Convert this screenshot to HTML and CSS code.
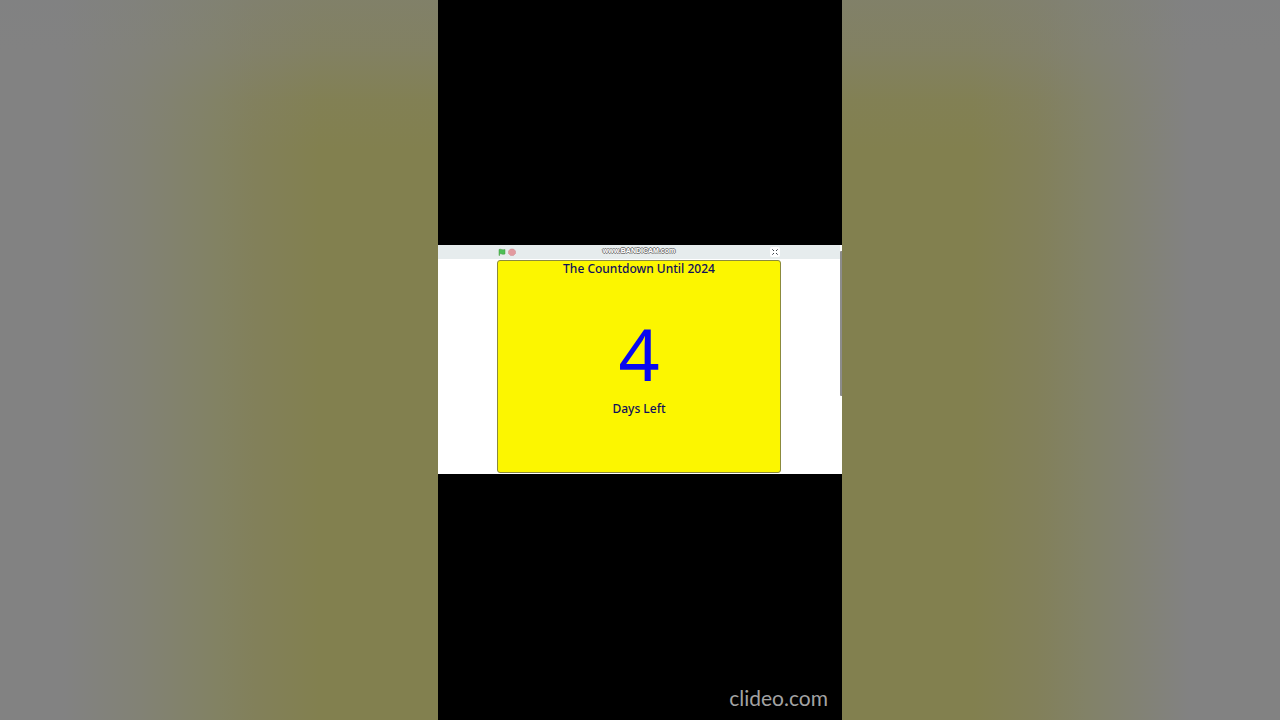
FILE: index.html
```
<!DOCTYPE html>
<html lang="en">
<head>
    <meta charset="UTF-8">
    <meta name="viewport" content="width=device-width, initial-scale=1.0">
    <title>The Countdown Until 2024</title>
    <link rel="stylesheet" href="styles.css">
</head>
<body>
    <main class="video">
        <section class="player">
            <div class="screen">
                <header class="toolbar">
                    <div class="controls">
                        <button class="btn" type="button" aria-label="Start">
                            <svg width="8" height="8" viewBox="0 0 16 16">
                                <path d="M2 3c4-2 6 2 12 0v9c-6 2-8-2-11 0v3H2z" fill="#4cbf56" stroke="#45993d"/>
                            </svg>
                        </button>
                        <button class="btn" type="button" aria-label="Stop">
                            <svg width="8" height="8" viewBox="0 0 16 16">
                                <path d="M5 2h6l4 4v5l-4 4H5l-4-4V6z" fill="#e29a9f" stroke="#cf8b90"/>
                            </svg>
                        </button>
                    </div>
                    <span class="recorder">www.BANDICAM.com</span>
                    <button class="btn fullscreen" type="button" aria-label="Exit full screen">
                        <svg width="8" height="8" viewBox="0 0 8 8">
                            <path d="M1 1l2 2M7 1l-2 2M1 7l2-2M7 7l-2-2" stroke="#7a7f86"/>
                            <path d="M2 2h1v1H2zM5 2h1v1H5zM2 5h1v1H2zM5 5h1v1H5z" fill="#3f454d"/>
                        </svg>
                    </button>
                </header>
                <div class="stage">
                    <h1 class="label">The Countdown Until 2024</h1>
                    <p class="number">4</p>
                    <p class="label">Days Left</p>
                </div>
            </div>
            <div class="scrollbar">
                <div class="thumb"></div>
            </div>
        </section>
        <span class="watermark">clideo.com</span>
    </main>
</body>
</html>
```
FILE: styles.css
```
* {
    margin: 0;
    padding: 0;
    box-sizing: border-box;
}

body {
    display: flex;
    justify-content: center;
    min-height: 100vh;
    font-family: "Noto Sans", sans-serif;
    background:
        linear-gradient(rgba(128, 129, 130, 0.5), rgba(130, 130, 130, 0.38) 50px, rgba(130, 130, 130, 0.1) 100px, rgba(130, 130, 130, 0) 150px),
        linear-gradient(90deg, #828282 5%, #828275 11%, #828263 17%, #82805a 20%, #82804f 25%, #82804f 76%, #82805a 81%, #828268 85%, #828282 93%);
}

.video {
    position: relative;
    display: flex;
    align-items: center;
    height: 100vh;
    aspect-ratio: 101 / 180;
    padding-bottom: 2px;
    background-color: #000;
}

.player {
    display: flex;
    width: 100%;
    background-color: #fff;
}

.screen {
    flex: 1;
    padding-bottom: 1px;
}

.toolbar {
    display: grid;
    grid-template-columns: 1fr auto 1fr;
    align-items: center;
    height: 14px;
    padding: 0 15%;
    background-color: #e6eced;
}

.controls {
    display: flex;
    gap: 2px;
}

.btn {
    display: flex;
    border: none;
    background: none;
}

.fullscreen {
    justify-self: end;
    padding: 1px;
    border-radius: 2px;
    background-color: #fff;
}

.recorder {
    align-self: start;
    font: bold 7px/12px "Liberation Sans", sans-serif;
    color: #fff;
    text-shadow: 1px 0 #777, -1px 0 #777, 0 1px #777, 0 -1px #777;
}

.stage {
    display: flex;
    flex-direction: column;
    align-items: center;
    width: 284px;
    max-width: 100%;
    aspect-ratio: 4 / 3;
    margin: 1px auto 0;
    border: 1px solid #8b8a3c;
    border-radius: 3px;
    background-color: #fcf600;
}

.label {
    font-size: 12px;
    font-weight: 500;
    line-height: 16px;
    color: #10105c;
}

.number {
    padding: 34px 0 6px;
    font-size: 72px;
    line-height: 84px;
    color: #0808f0;
}

.scrollbar {
    width: 2px;
    padding: 6px 0 78px;
}

.thumb {
    height: 100%;
    border-radius: 1px 0 0 1px;
    background-color: #8c8c8c;
}

.watermark {
    position: absolute;
    right: 14px;
    bottom: 8px;
    font: 21px/28px Lato, sans-serif;
    color: #a3a3a3;
}
```
